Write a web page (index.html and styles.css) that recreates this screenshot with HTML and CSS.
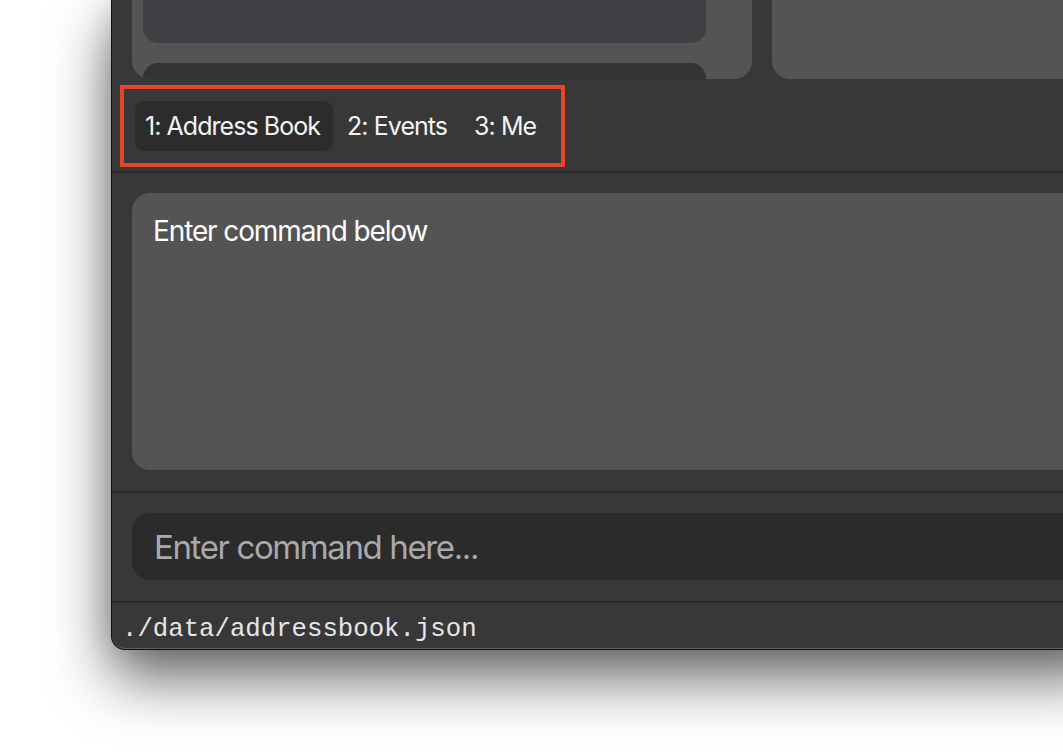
FILE: index.html
```html
<!DOCTYPE html>
<html lang="en">
<head>
<meta charset="utf-8">
<title>Address Book</title>
<link rel="stylesheet" href="styles.css">
</head>
<body>
<div class="window">
  <div class="lists">
    <div class="panel panel-left">
      <div class="card card-selected"></div>
      <div class="card"></div>
    </div>
    <div class="panel panel-right"></div>
  </div>
  <div class="tabbar">
    <div class="tabs">
      <div class="tab tab-active">1: Address Book</div>
      <div class="tab">2: Events</div>
      <div class="tab">3: Me</div>
    </div>
  </div>
  <div class="result-area">
    <div class="result-box">Enter command below</div>
  </div>
  <div class="command-area">
    <div class="command-box"><span class="placeholder">Enter command here...</span></div>
  </div>
  <div class="status-bar">./data/addressbook.json</div>
</div>
</body>
</html>
```

FILE: styles.css
```css
html, body {
  margin: 0;
  padding: 0;
}

body {
  background: #ffffff;
  width: 1063px;
  height: 753px;
  overflow: hidden;
  font-family: "Inter", "Noto Sans", sans-serif;
}

.window {
  margin-left: 111px;
  width: 1000px;
  height: 650px;
  box-sizing: border-box;
  background: #383838;
  border: 1px solid #101010;
  border-top: none;
  border-radius: 0 0 14px 14px;
  box-shadow: inset 0 -1px 0 #5e5e5e, 0 28px 60px rgba(0, 0, 0, 0.6), 0 0 30px rgba(0, 0, 0, 0.15);
  overflow: hidden;
  display: flex;
  flex-direction: column;
}

.lists {
  height: 79px;
  flex-shrink: 0;
  display: flex;
  gap: 20px;
  padding-left: 20px;
}

.panel {
  background: #545454;
  border-radius: 0 0 18px 18px;
  overflow: hidden;
}

.panel-left {
  width: 620px;
  flex-shrink: 0;
  box-sizing: border-box;
  padding: 0 46px 0 11px;
  display: flex;
  flex-direction: column;
  gap: 20px;
}

.panel-right {
  flex: 1;
}

.card {
  flex-shrink: 0;
  height: 70px;
  border-radius: 15px;
  background: #343434;
}

.card-selected {
  height: 63px;
  margin-top: -20px;
  background: #3f4043;
}

.tabbar {
  height: 92px;
  flex-shrink: 0;
  box-sizing: border-box;
  padding: 6px 0 0 8px;
}

.tabs {
  display: inline-flex;
  gap: 4px;
  border: 4px solid #e8432b;
  padding: 12px 12px 12px 11px;
}

.tab {
  height: 50px;
  box-sizing: border-box;
  padding: 0 13px 0 10px;
  display: flex;
  align-items: center;
  border-radius: 9px;
  color: #f4f4f4;
  font-size: 25px;
  letter-spacing: -0.038em;
  white-space: nowrap;
}

.tab-active {
  background: #2c2c2c;
}

.result-area {
  height: 320px;
  flex-shrink: 0;
  box-sizing: border-box;
  border-top: 2px solid #2a2a2a;
  padding: 20px 0 21px 20px;
  display: flex;
}

.result-box {
  flex: 1;
  background: #545454;
  border-radius: 18px 0 0 18px;
  padding: 22px 21px;
  color: #ffffff;
  font-size: 28px;
  letter-spacing: -0.04em;
  line-height: 1.21;
}

.command-area {
  height: 110px;
  flex-shrink: 0;
  box-sizing: border-box;
  border-top: 2px solid #2a2a2a;
  padding: 20px 0 21px 20px;
  display: flex;
}

.command-box {
  flex: 1;
  background: #2b2b2b;
  border-radius: 18px 0 0 18px;
  padding-left: 22px;
  display: flex;
  align-items: center;
}

.placeholder {
  color: #a9a9a9;
  font-size: 33px;
  letter-spacing: -0.042em;
}

.status-bar {
  flex: 1;
  border-top: 2px solid #2a2a2a;
  padding: 12px 0 0 10px;
  font-family: "Liberation Mono", "Courier New", monospace;
  font-size: 25.7px;
  line-height: 1.15;
  color: #e6e6e6;
  white-space: nowrap;
}
```
